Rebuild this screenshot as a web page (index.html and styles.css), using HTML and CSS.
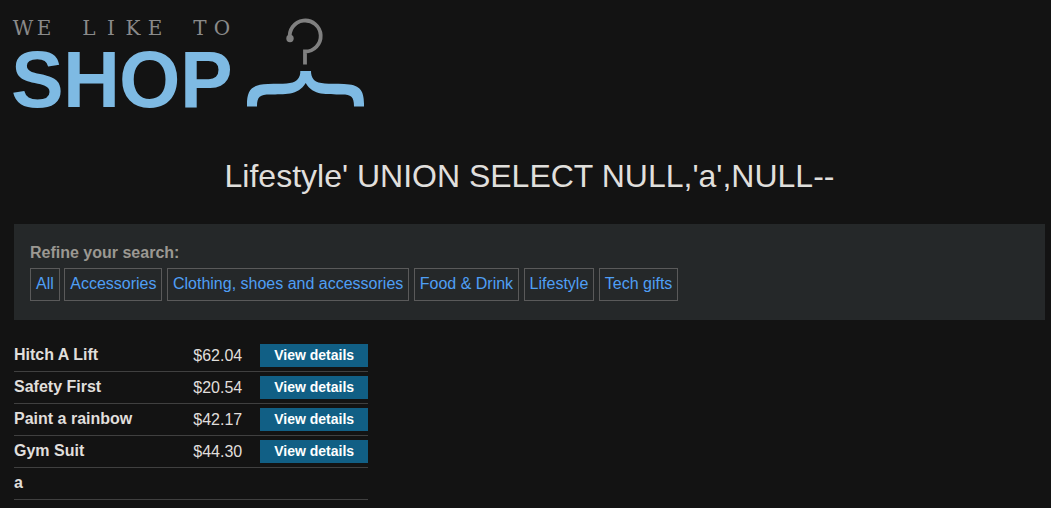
FILE: index.html
```html
<!DOCTYPE html>
<html lang="en">
<head>
<meta charset="utf-8">
<title>We Like to Shop</title>
<link rel="stylesheet" href="styles.css">
</head>
<body>
<main class="container">
  <header class="brand">
    <svg class="logo" width="352" height="96" viewBox="0 0 352 96" role="img" aria-label="We like to shop">
      <text class="logo-tagline" y="21" x="9 30 52 75 97 119 141 163 186 208">WE LIKE TO</text>
      <text class="logo-name" x="-3 49 105 166" y="93">SHOP</text>
      <g class="logo-hook">
        <path d="M276 25 A15.500 15.500 0 1 1 291 37.500 V50.500" fill="none" stroke-width="3.800"/>
        <circle cx="276" cy="24.500" r="3.700" stroke="none"/>
      </g>
      <path class="logo-hanger" d="M233 92.500 C232.600 76 237 70.500 254 70 C270 69.500 278 70.500 283 66 C286 63 286.300 60 286.300 57 H297 C297 60 297.500 63 300 66 C305 70.500 314 69.500 330 70 C346 70.500 350.500 76 350 92.500 H340 C340 82.500 337 80.500 328 80.500 C313 80 299 82 291.700 69 C284 82 270 80 256 80.500 C246 80.500 243 82.500 243 92.500 Z"/>
    </svg>
  </header>
  <h1 class="title">Lifestyle' UNION SELECT NULL,'a',NULL--</h1>
  <nav class="filters" aria-labelledby="filters-label">
    <span class="filters-label" id="filters-label">Refine your search:</span>
    <div class="filters-list">
      <a class="filter" href="#all">All</a>
      <a class="filter" href="#accessories">Accessories</a>
      <a class="filter" href="#clothing">Clothing, shoes and accessories</a>
      <a class="filter" href="#food">Food &amp; Drink</a>
      <a class="filter" href="#lifestyle">Lifestyle</a>
      <a class="filter" href="#tech">Tech gifts</a>
    </div>
  </nav>
  <table class="products">
    <tbody>
      <tr><th scope="row">Hitch A Lift</th><td class="price">$62.04</td><td><a class="details" href="#product-1">View details</a></td></tr>
      <tr><th scope="row">Safety First</th><td class="price">$20.54</td><td><a class="details" href="#product-2">View details</a></td></tr>
      <tr><th scope="row">Paint a rainbow</th><td class="price">$42.17</td><td><a class="details" href="#product-3">View details</a></td></tr>
      <tr><th scope="row">Gym Suit</th><td class="price">$44.30</td><td><a class="details" href="#product-4">View details</a></td></tr>
      <tr><th scope="row">a</th><td></td><td></td></tr>
    </tbody>
  </table>
</main>
</body>
</html>
```
FILE: styles.css
```css
* {
  box-sizing: border-box;
}

body {
  margin: 0;
  background: #131313;
  color: #e0dfdc;
  font-family: "Liberation Sans", Arial, sans-serif;
  font-size: 16px;
  line-height: 20px;
}

.container {
  padding: 14px 6px 0 14px;
}

.logo {
  display: block;
  overflow: visible;
}

.logo-tagline {
  fill: #8a8a8a;
  font-family: "DejaVu Serif", serif;
  font-size: 20px;
  text-anchor: middle;
}

.logo-name {
  fill: #7ebae3;
  font-size: 79px;
  font-weight: bold;
}

.logo-hook {
  fill: #808080;
  stroke: #808080;
}

.logo-hanger {
  fill: #7ebae3;
}

.title {
  margin: 46px 0 28px;
  font-size: 32px;
  font-weight: normal;
  line-height: 40px;
  text-align: center;
}

.filters {
  padding: 19px 16px;
  background: #252829;
}

.filters-label {
  display: block;
  margin-bottom: 5px;
  color: #9b9892;
  font-weight: bold;
}

.filter {
  display: inline-block;
  padding: 5px 5px 6px;
  border: 1px solid #5a5a5a;
  color: #4f9ff5;
  text-decoration: none;
}

.products {
  margin-top: 20px;
  border-spacing: 0;
}

.products th,
.products td {
  height: 32px;
  padding: 0;
  border-bottom: 1px solid #404040;
  vertical-align: middle;
}

.products th {
  padding-right: 61px;
  padding-bottom: 1px;
  text-align: left;
}

.products .price {
  padding-right: 18px;
}

.details {
  display: block;
  padding: 0 14px;
  background: #115f85;
  color: #fff;
  font-size: 14px;
  font-weight: bold;
  line-height: 23px;
  text-decoration: none;
}
```
